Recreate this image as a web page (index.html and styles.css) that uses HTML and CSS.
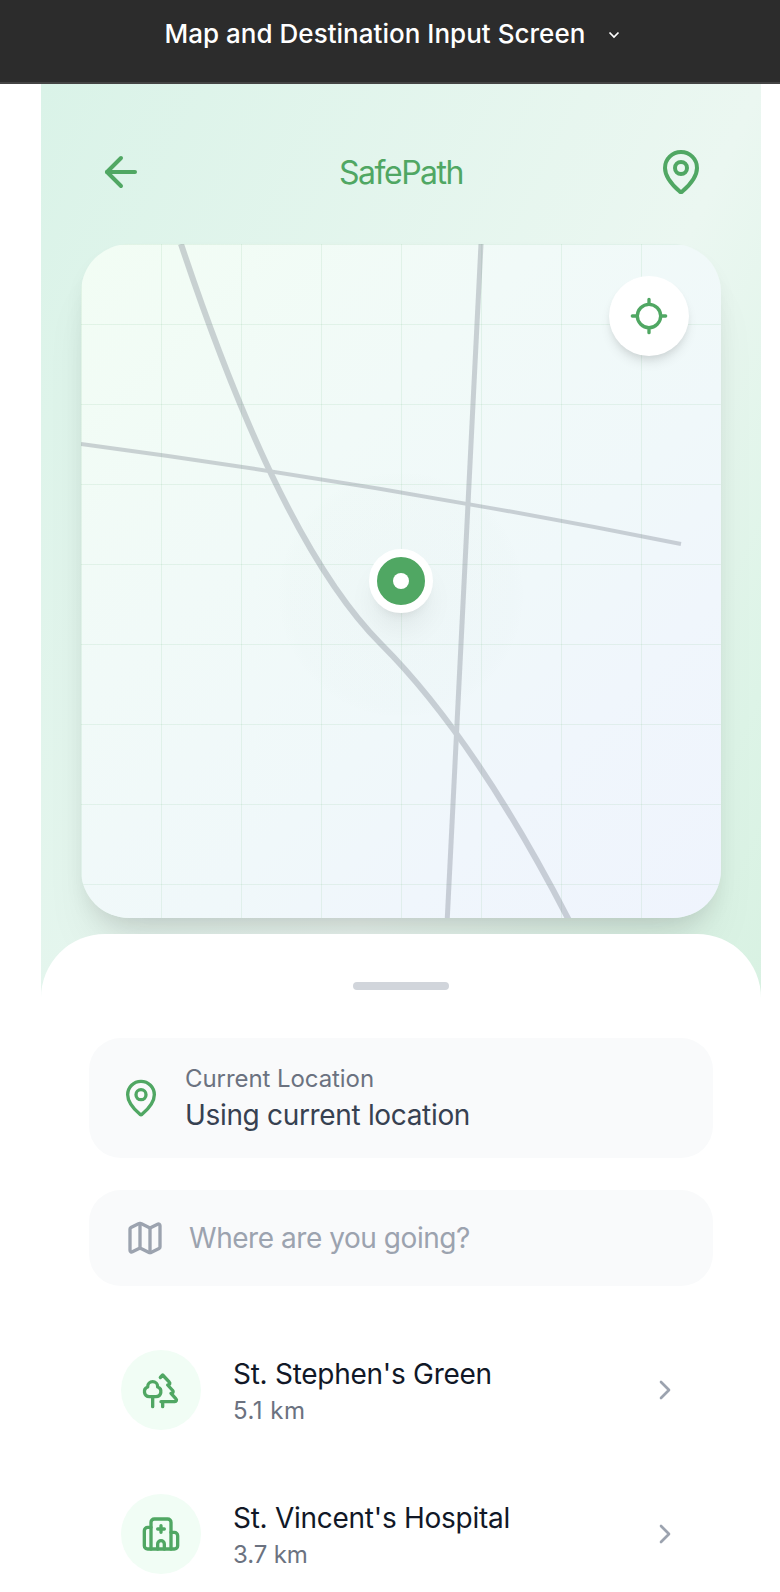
FILE: index.html
```html
<!DOCTYPE html>
<html lang="en">
<head>
<meta charset="utf-8">
<title>SafePath</title>
<link rel="stylesheet" href="styles.css">
</head>
<body>
<header class="topbar">
  <span class="topbar-title">Map and Destination Input Screen</span>
  <svg class="topbar-caret" viewBox="0 0 12 8"><path d="M1.5 1.5l4.5 4.5 4.5-4.5"/></svg>
</header>
<main class="phone">
  <nav class="nav">
    <svg class="icon icon-lg" viewBox="0 0 24 24"><path d="m12 19-7-7 7-7"/><path d="M19 12H5"/></svg>
    <h1 class="brand">SafePath</h1>
    <svg class="icon icon-lg" viewBox="0 0 24 24"><path d="M20 10c0 4.993-5.539 10.193-7.399 11.799a1 1 0 0 1-1.202 0C9.539 20.193 4 14.993 4 10a8 8 0 0 1 16 0"/><circle cx="12" cy="10" r="3"/></svg>
  </nav>
  <section class="map">
    <svg class="roads" viewBox="0 0 320 337">
      <path d="M50 0Q100 150 150 200T250 350" stroke-width="3"/>
      <path d="M0 100Q150 120 300 150" stroke-width="2"/>
      <path d="M200 0Q190 200 180 400" stroke-width="2.5"/>
    </svg>
    <button class="locate" aria-label="Locate"><svg class="icon" viewBox="0 0 24 24"><path d="M2 12h3M19 12h3M12 2v3M12 19v3"/><circle cx="12" cy="12" r="7"/></svg></button>
    <div class="marker"><span class="marker-dot"></span></div>
  </section>
  <section class="sheet">
    <div class="handle"></div>
    <div class="field field-current">
      <svg class="icon" viewBox="0 0 24 24"><path d="M20 10c0 4.993-5.539 10.193-7.399 11.799a1 1 0 0 1-1.202 0C9.539 20.193 4 14.993 4 10a8 8 0 0 1 16 0"/><circle cx="12" cy="10" r="3"/></svg>
      <div class="lines">
        <span class="label">Current Location</span>
        <span class="value">Using current location</span>
      </div>
    </div>
    <div class="field field-search">
      <svg class="icon muted" viewBox="0 0 24 24"><path d="M14.106 5.553a2 2 0 0 0 1.788 0l3.659-1.83A1 1 0 0 1 21 4.619v12.764a1 1 0 0 1-.553.894l-4.553 2.277a2 2 0 0 1-1.788 0l-4.212-2.106a2 2 0 0 0-1.788 0l-3.659 1.83A1 1 0 0 1 3 19.381V6.618a1 1 0 0 1 .553-.894l4.553-2.277a2 2 0 0 1 1.788 0z"/><path d="M15 5.764v15M9 3.236v15"/></svg>
      <span class="placeholder">Where are you going?</span>
    </div>
    <ul class="places">
      <li class="place">
        <span class="badge"><svg class="icon" viewBox="0 0 24 24"><path d="M10 10v.2A3 3 0 0 1 8.9 16H5a3 3 0 0 1-1-5.8V10a3 3 0 0 1 6 0Z"/><path d="M7 16v6M13 19v3"/><path d="M12 19h8.3a1 1 0 0 0 .7-1.7L18 14h.3a1 1 0 0 0 .7-1.7L16 9h.2a1 1 0 0 0 .8-1.7L13 3l-1.4 1.5"/></svg></span>
        <div class="lines"><span class="name">St. Stephen's Green</span><span class="distance distance-wide">5.1 km</span></div>
        <svg class="icon icon-sm muted" viewBox="0 0 24 24"><path d="m9 18 6-6-6-6"/></svg>
      </li>
      <li class="place">
        <span class="badge"><svg class="icon" viewBox="0 0 24 24"><path d="M12 7v4M14 9h-4"/><path d="M14 21v-3a2 2 0 0 0-4 0v3"/><path d="M18 11h2a2 2 0 0 1 2 2v6a2 2 0 0 1-2 2H4a2 2 0 0 1-2-2v-9a2 2 0 0 1 2-2h2"/><path d="M18 21V5a2 2 0 0 0-2-2H8a2 2 0 0 0-2 2v16"/></svg></span>
        <div class="lines"><span class="name">St. Vincent's Hospital</span><span class="distance">3.7 km</span></div>
        <svg class="icon icon-sm muted" viewBox="0 0 24 24"><path d="m9 18 6-6-6-6"/></svg>
      </li>
    </ul>
  </section>
</main>
</body>
</html>
```
FILE: styles.css
```css
* { box-sizing: border-box; }
body {
  margin: 0;
  height: 1592px;
  overflow: hidden;
  background: #fff;
  font-family: Inter, "Liberation Sans", sans-serif;
}
.topbar {
  height: 84px;
  padding: 0 0 15px 164.5px;
  display: flex;
  align-items: center;
  gap: 23px;
  background: #2c2c2c;
  border-bottom: 2px solid #444;
  color: #fff;
}
.topbar-title { font-size: 26px; font-weight: 500; letter-spacing: .02px; white-space: nowrap; }
.topbar-caret { width: 12px; height: 8px; margin-top: 2px; fill: none; stroke: #fff; stroke-width: 1.7; }
.phone {
  width: 720px;
  height: 1508px;
  margin-left: 41px;
  display: flex;
  flex-direction: column;
  background: linear-gradient(to bottom right, #daf3e8 0%, #ebf7f1 50%, #ddf4e7 70%, #cfecd9 100%);
}
.nav {
  height: 160px;
  flex: none;
  padding: 16px 56px 0;
  display: flex;
  align-items: center;
  justify-content: space-between;
}
.brand { margin: 0; font-size: 32px; font-weight: 420; letter-spacing: -1.5px; color: #50a763; }
.icon {
  width: 40px;
  height: 40px;
  flex: none;
  fill: none;
  stroke: #50a763;
  stroke-width: 2;
  stroke-linecap: round;
  stroke-linejoin: round;
}
.icon-lg { width: 48px; height: 48px; }
.icon-sm { width: 32px; height: 32px; }
.muted { stroke: #9ca3af; }
.map {
  position: relative;
  height: 674px;
  flex: none;
  margin: 0 40px 16px;
  border-radius: 48px;
  background:
    linear-gradient(rgba(80, 167, 99, .1) 1px, transparent 1px) 0 0 / 80px 80px,
    linear-gradient(90deg, rgba(80, 167, 99, .1) 1px, transparent 1px) 0 0 / 80px 80px,
    radial-gradient(circle 125px at 50% 52%, rgba(80, 120, 100, .014), rgba(80, 120, 100, .008) 90%, transparent),
    linear-gradient(135deg, #f2fdf4 0%, #f1faf8 35%, #f0f8fa 60%, #f0f6fc 75%, #eff4fd 100%);
  box-shadow: 0 40px 50px -12px rgba(0, 0, 0, .08), 0 12px 24px -8px rgba(0, 0, 0, .12);
  display: flex;
  align-items: center;
  justify-content: center;
}
.roads { position: absolute; inset: 0; width: 640px; height: 674px; fill: none; stroke: #6b7280; opacity: .3; }
.locate {
  position: absolute;
  top: 32px;
  right: 32px;
  width: 80px;
  height: 80px;
  padding: 0;
  border: 0;
  border-radius: 50%;
  background: #fff;
  display: grid;
  place-items: center;
  box-shadow: 0 8px 12px -2px rgba(0, 0, 0, .1), 0 4px 8px -4px rgba(0, 0, 0, .1);
}
.marker {
  position: relative;
  width: 64px;
  height: 64px;
  border: 8px solid #fff;
  border-radius: 50%;
  background: #50a763;
  display: grid;
  place-items: center;
  box-shadow: 0 20px 30px -6px rgba(0, 0, 0, .07), 0 8px 12px -8px rgba(0, 0, 0, .1);
}
.marker-dot { width: 16px; height: 16px; border-radius: 50%; background: #fff; }
.sheet {
  position: relative;
  flex: 1;
  padding: 48px 48px 0;
  border-radius: 64px 64px 0 0;
  background: #fff;
}
.handle { width: 96px; height: 8px; margin: 0 auto 48px; border-radius: 4px; background: #d1d5db; }
.field {
  display: flex;
  align-items: center;
  gap: 24px;
  margin-bottom: 32px;
  border-radius: 32px;
  background: #f9fafb;
}
.field-current { height: 120px; padding: 0 32px; }
.field-search { height: 96px; padding: 0 36px; }
.lines { flex: 1; display: flex; flex-direction: column; white-space: nowrap; }
.label { padding-top: 1px; font-size: 24px; line-height: 32px; letter-spacing: -.07px; color: #6b7280; }
.value { font-size: 28px; line-height: 40px; letter-spacing: -.33px; color: #374151; }
.placeholder { font-size: 28px; line-height: 40px; letter-spacing: -.45px; color: #9ca3af; }
.places { margin: 0; padding: 0; list-style: none; }
.place { height: 144px; padding: 0 32px; display: flex; align-items: center; gap: 32px; }
.badge { width: 80px; height: 80px; border-radius: 50%; background: #f1fdf5; display: grid; place-items: center; }
.name { font-size: 28px; line-height: 40px; letter-spacing: -.27px; color: #111827; }
.distance { padding-top: 1px; font-size: 24px; line-height: 32px; letter-spacing: -.1px; color: #6b7280; }
.distance-wide { letter-spacing: .5px; }
```
